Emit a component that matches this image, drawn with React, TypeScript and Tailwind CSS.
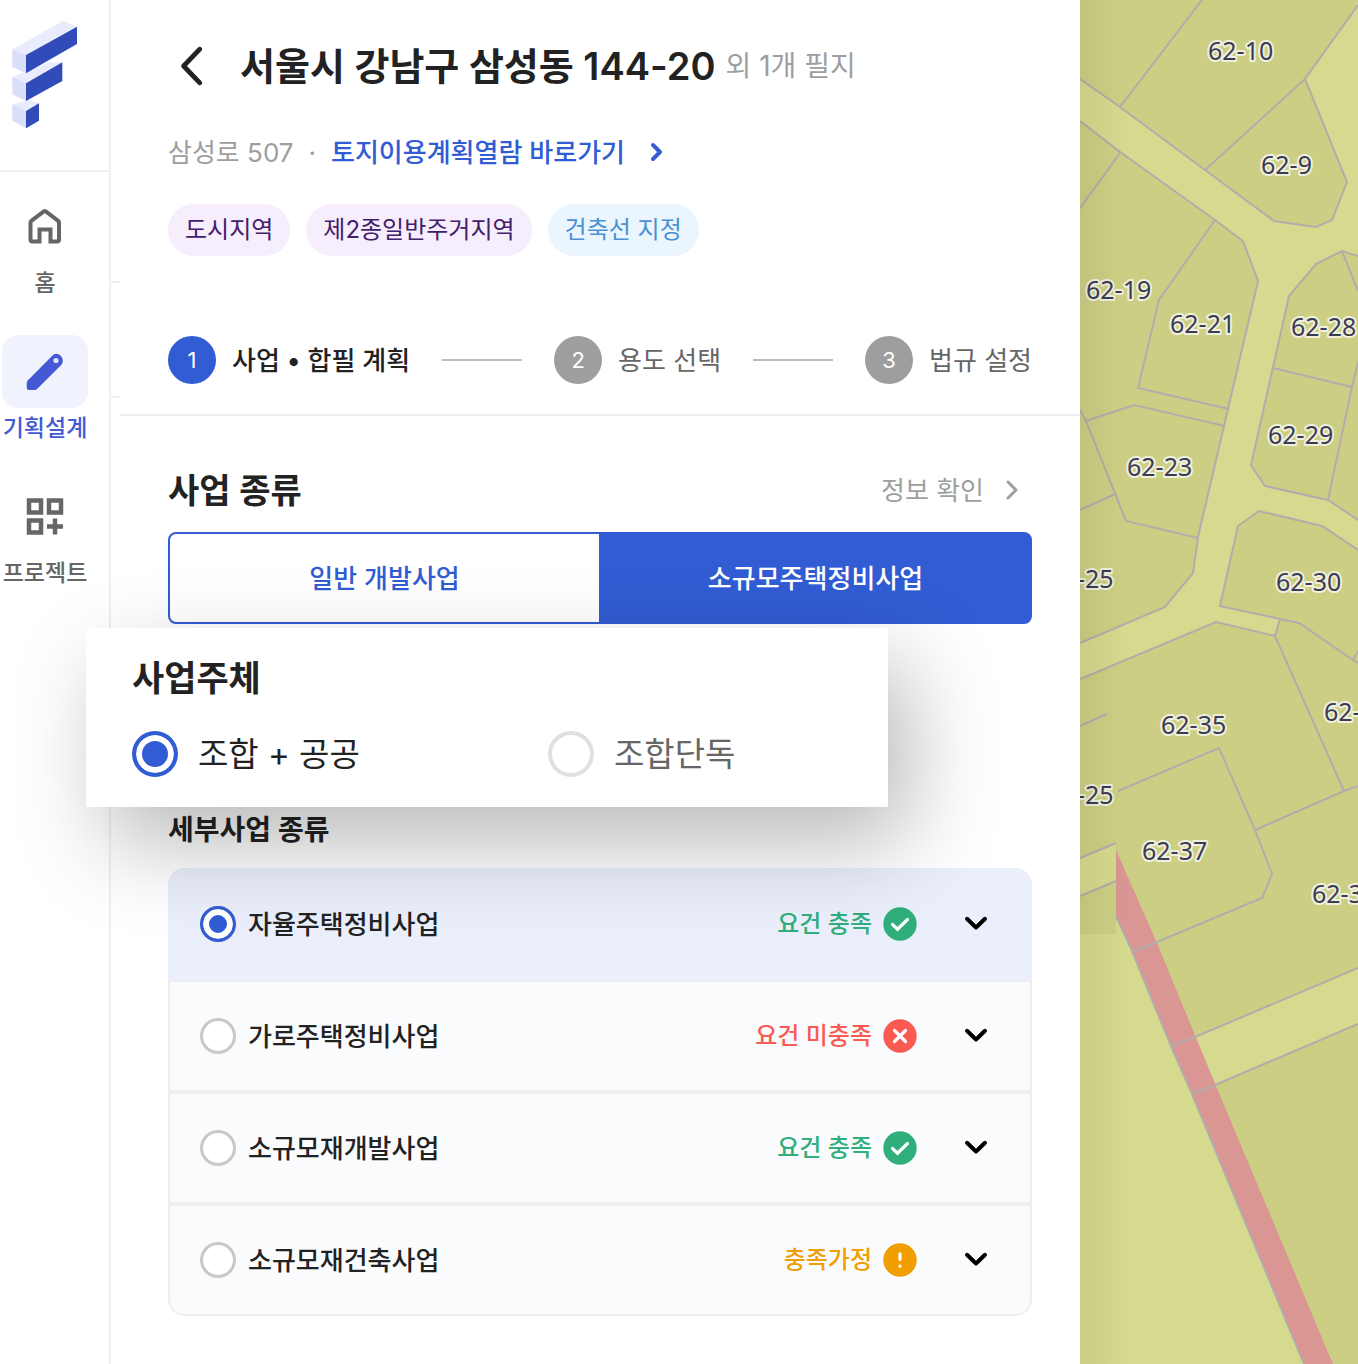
import { useState } from 'react'
import clsx from 'clsx'

const STEPS = ['사업 • 합필 계획', '용도 선택', '법규 설정']

const TAGS = [
  { label: '도시지역', className: 'bg-[#f6edfd] text-[#43206b]' },
  { label: '제2종일반주거지역', className: 'bg-[#f6edfd] text-[#43206b]' },
  { label: '건축선 지정', className: 'bg-[#ebf5fe] text-[#4a90d4]' },
]

const DETAILS = [
  { name: '자율주택정비사업', status: 'ok', text: '요건 충족' },
  { name: '가로주택정비사업', status: 'fail', text: '요건 미충족' },
  { name: '소규모재개발사업', status: 'ok', text: '요건 충족' },
  { name: '소규모재건축사업', status: 'assume', text: '충족가정' },
]

const STATUS = {
  ok: { className: 'text-[#30ae7b]', d: 'M12.500 20.500 17.500 25.200 27.500 15.500' },
  fail: { className: 'text-[#fb5a50]', d: 'M14.500 14.500 25.500 25.500M25.500 14.500 14.500 25.500' },
  assume: { className: 'text-[#f29d00]', d: 'M20 13.800V19.500M20 26V26.200' },
}

// 필지 경계선
const PARCEL_LINES = [
  '1202,0 1120,107',
  '1080,79 1120,107 1205,170 1274,221 1316,227 1332,220 1347,182 1305,79 1358,5',
  '1305,79 1205,170',
  '1080,121 1120,152 1215,220 1243,241 1258,281 1228,409 1198,537 1193,573 1165,607 1080,643',
  '1120,153 1080,208',
  '1215,220 1159,300 1138,388 1229,409',
  '1080,410 1086,421 1134,405 1225,426',
  '1086,421 1126,521 1198,538',
  '1080,510 1115,494',
  '1358,256 1342,251 1316,264 1289,296 1251,465 1265,486 1328,500 1358,520',
  '1342,251 1358,291',
  '1273,368 1352,387',
  '1358,362 1352,387 1328,500',
  '1358,550 1322,526 1259,511 1238,526 1220,606 1280,619 1299,623 1353,660 1358,663',
  '1353,660 1358,651',
  '1080,679 1216,622 1275,636 1280,619',
  '1275,636 1344,791',
  '1358,786 1344,791 1255,830',
  '1118,791 1219,748 1255,830 1272,874 1262,898 1157,942 1132,952',
  '1080,726 1107,714',
  '1080,858 1116,843',
  '1080,896 1116,881',
  '1358,968 1195,1037 1171,1046',
  '1358,1024 1215,1085 1192,1094',
  '1116,916 1132,951 1171,1046 1192,1094 1304,1364',
]

const PARCEL_LABELS = [
  { x: 1208, y: 60, text: '62-10' },
  { x: 1261, y: 174, text: '62-9' },
  { x: 1086, y: 299, text: '62-19' },
  { x: 1170, y: 333, text: '62-21' },
  { x: 1291, y: 336, text: '62-28' },
  { x: 1268, y: 444, text: '62-29' },
  { x: 1127, y: 476, text: '62-23' },
  { x: 1077, y: 588, text: '-25' },
  { x: 1276, y: 591, text: '62-30' },
  { x: 1161, y: 734, text: '62-35' },
  { x: 1324, y: 721, text: '62-' },
  { x: 1077, y: 804, text: '-25' },
  { x: 1142, y: 860, text: '62-37' },
  { x: 1312, y: 903, text: '62-3' },
]

function Logo() {
  return (
    <svg viewBox="0 0 240 390" className="h-[130px] w-20">
      <path fill="#e9ecfd" d="M37 148 190 62l41 18L78 165zM37 230l113-43 37 0L78 250zM37 312l50-12 30 10-39 23z" />
      <path fill="#d9def9" d="M37 148l41 17v55l-41-20zM37 230l41 20v53l-41-20zM37 312l41 21v52l-41-23z" />
      <path fill="#314cb8" d="M78 165 231 80v52L78 220zM78 250l109-63v56L78 303zM78 333l39-23v52l-39 23z" />
    </svg>
  )
}

function HomeIcon() {
  return (
    <svg viewBox="0 0 40 40" className="size-10" fill="none" stroke="currentColor" strokeWidth="4">
      <path d="M5.500 15.500Q5.500 14.500 6.300 13.900L18.500 4.600Q19.800 3.700 21.100 4.600L33.200 13.900Q34 14.500 34 15.500V32.500a2 2 0 0 1-2 2H25.500V22.500H14.500V34.500H7.500a2 2 0 0 1-2-2Z" />
    </svg>
  )
}

function PencilIcon() {
  return (
    <svg viewBox="0 0 40 40" className="size-10" fill="currentColor">
      <path d="M1.700 31Q1.700 29.500 2.700 28.500L27 4Q31 0 35.500 3.500Q40 8.500 36.200 13L12 37Q11 38 9.500 38H4Q1.700 38 1.700 35.700Z" />
      <circle cx="31" cy="8.500" r="2.600" fill="#dfe4fb" />
    </svg>
  )
}

function ProjectIcon() {
  return (
    <svg viewBox="0 0 40 40" className="size-10" fill="none" stroke="currentColor" strokeWidth="4.500">
      <path d="M4 3.500h12v12H4zM24 3.500h12v12H24zM4 23.500h12v12H4zM30 21.500v16M22 29.500h16" />
    </svg>
  )
}

function Chevron(props: { d: string; className: string; strokeWidth: number }) {
  return (
    <svg
      viewBox="0 0 40 40"
      className={props.className}
      fill="none"
      stroke="currentColor"
      strokeWidth={props.strokeWidth}
      strokeLinecap="round"
      strokeLinejoin="round"
    >
      <path d={props.d} />
    </svg>
  )
}

function StatusIcon(props: { d: string }) {
  return (
    <svg viewBox="0 0 40 40" className="size-10">
      <circle cx="20" cy="20" r="16.700" fill="currentColor" />
      <path d={props.d} fill="none" stroke="#fff" strokeWidth="3.200" strokeLinecap="round" />
    </svg>
  )
}

function NavItem(props: { label: string; icon: React.ReactNode; active?: boolean }) {
  return (
    <a
      href="#"
      className={clsx(
        'flex flex-col items-center',
        props.active ? 'text-[#4459d3]' : 'text-[#666]'
      )}
    >
      <span
        className={clsx(
          'flex h-[73px] w-[86px] items-center justify-center rounded-2xl',
          props.active && 'bg-[#f0f3fe]'
        )}
      >
        {props.icon}
      </span>
      <span className="text-[23px] leading-10 font-medium whitespace-nowrap">{props.label}</span>
    </a>
  )
}

function ParcelMap() {
  return (
    <div className="relative min-w-0 flex-1 overflow-hidden bg-[#d6da8e]">
      <svg
        viewBox="1080 0 278 1364"
        preserveAspectRatio="xMinYMin slice"
        className="absolute inset-0 h-full w-full"
      >
        <g fill="#cccf83">
          <path d="M1080 0H1358V5L1305 79 1347 182 1332 220 1316 227 1274 221 1205 170 1080 79Z" />
          <path d="M1080 121 1215 220 1243 241 1258 281 1228 409 1198 537 1193 573 1165 607 1080 643Z" />
          <path d="M1358 256 1342 251 1316 264 1289 296 1251 465 1265 486 1328 500 1358 520Z" />
          <path d="M1238 526 1259 511 1322 526 1358 550V968L1195 1037 1116 850V843L1080 858V679L1216 622 1275 636 1280 619 1220 606Z" />
          <path d="M1080 896 1116 881V934H1080Z" />
          <path d="M1215 1085 1358 1024V1364H1330Z" />
        </g>
        <path fill="#d99692" d="M1116 850 1157 943 1216 1086 1333 1364H1304L1192 1094 1171 1046 1132 951 1116 916Z" />
        <g fill="none" stroke="#b3acab" strokeWidth="2">
          {PARCEL_LINES.map((points) => (
            <polyline key={points} points={points} />
          ))}
        </g>
        <g
          className="font-['Noto_Sans',sans-serif] text-[25px]"
          fill="#3c3c50"
          stroke="#f0f0df"
          strokeWidth="4"
          strokeLinejoin="round"
          paintOrder="stroke"
        >
          {PARCEL_LABELS.map((label) => (
            <text key={label.text + label.y} x={label.x} y={label.y}>
              {label.text}
            </text>
          ))}
        </g>
      </svg>
      <div className="absolute inset-y-0 left-0 w-12 bg-linear-to-r from-black/6 to-transparent" />
    </div>
  )
}

export default function App() {
  const [kind, setKind] = useState('small')
  const [owner, setOwner] = useState('public')
  const [detail, setDetail] = useState('자율주택정비사업')

  return (
    <div className="flex min-h-screen overflow-hidden bg-white font-['Inter','Noto_Sans_CJK_KR',sans-serif] text-[#222]">
      {/* 사이드바 */}
      <aside className="w-[111px] shrink-0 border-r-2 border-[#efefef]">
        <div className="h-43 border-b-2 border-[#efefef]">
          <Logo />
        </div>
        <nav className="flex w-[90px] flex-col items-center gap-8 pt-[18px]">
          <NavItem label="홈" icon={<HomeIcon />} />
          <NavItem label="기획설계" icon={<PencilIcon />} active />
          <NavItem label="프로젝트" icon={<ProjectIcon />} />
        </nav>
      </aside>

      <div className="w-[9px] shrink-0">
        <div className="h-[283px] border-b-2 border-[#efefef]" />
        <div className="h-[115px] border-b-2 border-[#efefef]" />
      </div>

      <main className="w-[960px] shrink-0">
        {/* 주소, 용도지역, 단계 */}
        <header className="border-b-2 border-[#eee] px-12 pt-9 pb-[30px]">
          <div className="flex h-15 items-center">
            <button type="button" aria-label="뒤로" className="mr-6">
              <Chevron d="M26.500 6 13 20 26.500 34" strokeWidth={4} className="size-12" />
            </button>
            <h1 className="text-[38px] font-semibold whitespace-nowrap">서울시 강남구 삼성동 144-20</h1>
            <span className="ml-2.5 text-[28px] whitespace-nowrap text-[#9e9e9e]">외 1개 필지</span>
          </div>

          <div className="mt-9 flex h-10 items-center text-[26px]">
            <span className="text-[#9e9e9e]">삼성로 507</span>
            <span className="mx-[15px] text-[#9e9e9e]">·</span>
            <a href="#" className="flex items-center gap-3 font-medium text-[#315cd3]">
              토지이용계획열람 바로가기
              <Chevron d="M16 13 23 20 16 27" strokeWidth={4} className="size-10" />
            </a>
          </div>

          <div className="mt-8 flex gap-4">
            {TAGS.map((tag) => (
              <span
                key={tag.label}
                className={clsx('rounded-full px-[17px] text-2xl leading-[52px]', tag.className)}
              >
                {tag.label}
              </span>
            ))}
          </div>

          <ol className="mt-20 flex items-center justify-between text-[26px]">
            {STEPS.map((step, i) => (
              <li key={step} className="contents">
                {i > 0 && <span className="h-0.5 w-20 bg-[#bdbdbd]" />}
                <span className="flex items-center gap-4">
                  <span
                    className={clsx(
                      'flex size-12 items-center justify-center rounded-full text-[22px] text-white',
                      i === 0 ? 'bg-[#315cd3]' : 'bg-[#9e9e9e]'
                    )}
                  >
                    {i + 1}
                  </span>
                  <span className={i === 0 ? 'font-medium' : 'text-[#666]'}>{step}</span>
                </span>
              </li>
            ))}
          </ol>
        </header>

        <section className="px-12 pt-12 pb-12">
          {/* 사업 종류 */}
          <div className="flex h-[52px] items-center justify-between">
            <h2 className="text-[34px] font-semibold">사업 종류</h2>
            <a href="#" className="flex items-center gap-2 text-[26px] text-[#9e9e9e]">
              정보 확인
              <Chevron d="M16 12 24 20 16 28" strokeWidth={3} className="size-10" />
            </a>
          </div>
          <div className="mt-4 flex h-23 text-[26px] font-medium">
            <button
              type="button"
              onClick={() => setKind('normal')}
              className={clsx(
                'flex-1 rounded-l-lg border-2 border-[#315cd3]',
                kind === 'normal' ? 'bg-[#315cd3] text-white' : 'text-[#315cd3]'
              )}
            >
              일반 개발사업
            </button>
            <button
              type="button"
              onClick={() => setKind('small')}
              className={clsx(
                '-ml-0.5 flex-1 rounded-r-lg border-2 border-[#315cd3]',
                kind === 'small' ? 'bg-[#315cd3] text-white' : 'text-[#315cd3]'
              )}
            >
              소규모주택정비사업
            </button>
          </div>

          {/* 사업주체 */}
          <fieldset className="relative z-10 mt-1 -ml-[82px] w-[802px] bg-white px-[46px] pt-6 pb-[30px] shadow-[20px_36px_90px_rgba(0,0,0,0.28)]">
            <legend className="float-left w-full text-[35px] leading-[52px] font-semibold">사업주체</legend>
            <div className="clear-both grid grid-cols-[416px_1fr] pt-[27px] text-[33px] leading-[46px]">
              <label className="flex items-center gap-5">
                <input
                  type="radio"
                  name="owner"
                  checked={owner === 'public'}
                  onChange={() => setOwner('public')}
                  className="size-[46px] appearance-none rounded-full border-4 border-[#e0e0e0] bg-white checked:border-[#315cd3] checked:bg-[#315cd3] checked:shadow-[inset_0_0_0_6px_#fff]"
                />
                조합 + 공공
              </label>
              <label className="flex items-center gap-5 text-[#666]">
                <input
                  type="radio"
                  name="owner"
                  checked={owner === 'union'}
                  onChange={() => setOwner('union')}
                  className="size-[46px] appearance-none rounded-full border-4 border-[#e0e0e0] bg-white checked:border-[#315cd3] checked:bg-[#315cd3] checked:shadow-[inset_0_0_0_6px_#fff]"
                />
                조합단독
              </label>
            </div>
          </fieldset>

          {/* 세부사업 종류 */}
          <h3 className="mb-[15px] text-[28px] leading-[46px] font-semibold">세부사업 종류</h3>
          <ul className="overflow-hidden rounded-2xl">
            {DETAILS.map((item) => {
              const status = STATUS[item.status as keyof typeof STATUS]
              return (
                <li
                  key={item.name}
                  className={clsx(
                    'flex h-28 items-center border-2 pr-[34px] pl-[30px] first:rounded-t-2xl last:rounded-b-2xl',
                    detail === item.name
                      ? 'border-[#ebeffc] bg-[#ebeffc]'
                      : 'border-[#eee] bg-[#fafbfd]'
                  )}
                >
                  <label className="flex flex-1 items-center gap-3 text-[26px] font-medium">
                    <input
                      type="radio"
                      name="detail"
                      checked={detail === item.name}
                      onChange={() => setDetail(item.name)}
                      className="size-9 appearance-none rounded-full border-3 border-[#c8c8c8] bg-white checked:border-[#315cd3] checked:bg-[#315cd3] checked:shadow-[inset_0_0_0_6px_#fff]"
                    />
                    {item.name}
                  </label>
                  <span className={clsx('flex items-center gap-2 text-2xl font-medium', status.className)}>
                    {item.text}
                    <StatusIcon d={status.d} />
                  </span>
                  <button type="button" aria-label={`${item.name} 펼치기`} className="ml-9 text-black">
                    <Chevron d="M11 14.800 20 23.500 29 14.800" strokeWidth={4} className="size-10" />
                  </button>
                </li>
              )
            })}
          </ul>
        </section>
      </main>

      <ParcelMap />
    </div>
  )
}
